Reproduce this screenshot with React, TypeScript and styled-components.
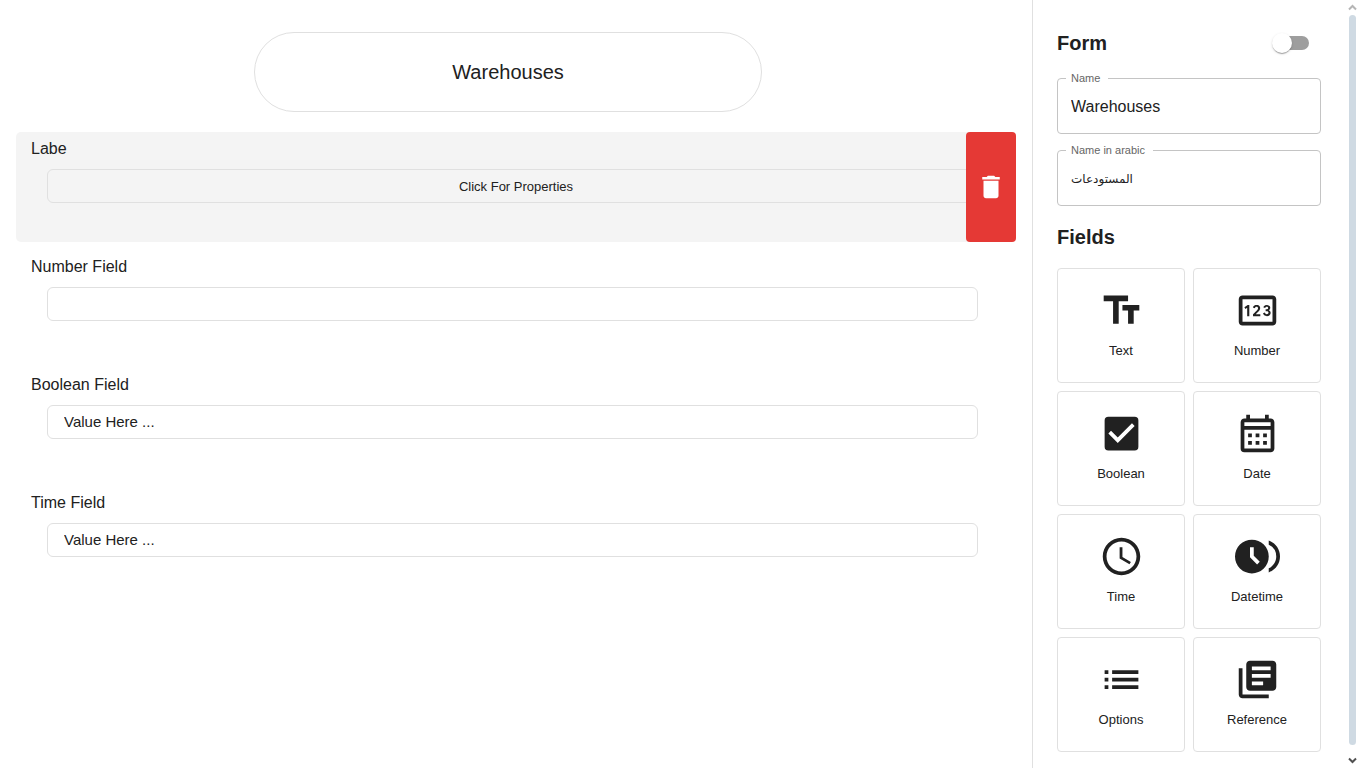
import React from "react";
import styled, { createGlobalStyle } from "styled-components";
import {
  MdAccessTime,
  MdBrowseGallery,
  MdCheckBox,
  MdDelete,
  MdLibraryBooks,
  MdList,
  MdOutlineCalendarMonth,
  MdOutlinePin,
  MdTextFields,
} from "react-icons/md";
import type { IconType } from "react-icons";

const GlobalStyle = createGlobalStyle`
  *, *::before, *::after { box-sizing: border-box; }
  body {
    margin: 0;
    background: #fff;
    color: #212121;
    font-family: "Liberation Sans", Arial, sans-serif;
    font-size: 16px;
  }
  button, input { font: inherit; color: inherit; }
`;

const Page = styled.div`
  display: flex;
  min-height: 100vh;
`;

const Canvas = styled.main`
  flex: 1;
  min-width: 0;
  display: flex;
  flex-direction: column;
  gap: 20px;
  padding: 32px 16px;
`;

const TitleBar = styled.header`
  display: flex;
  justify-content: center;
  padding-right: 16px;
`;

const FormTitle = styled.h1`
  display: flex;
  align-items: center;
  justify-content: center;
  width: 508px;
  max-width: 100%;
  height: 80px;
  margin: 0;
  border: 1px solid #e0e0e0;
  border-radius: 40px;
  font-size: 20px;
  font-weight: 400;
`;

const FieldList = styled.div`
  display: flex;
  flex-direction: column;
  gap: 8px;
`;

const FieldRow = styled.section<{ $selected?: boolean }>`
  position: relative;
  display: flex;
  flex-direction: column;
  gap: 8px;
  min-height: 110px;
  padding: 5px 0;
  border-radius: 5px;
  background: ${(p) => (p.$selected ? "#f4f4f4" : "transparent")};
`;

const FieldLabel = styled.label`
  margin-left: 15px;
  line-height: 24px;
`;

const FieldInput = styled.input`
  height: 34px;
  margin: 0 38px 0 31px;
  padding: 0 16px 2px;
  border: 1px solid #e0e0e0;
  border-radius: 6px;
  background: transparent;
  font-size: 15px;
  outline: none;
  &::placeholder {
    color: #212121;
    opacity: 1;
  }
`;

const PropertiesButton = styled.button`
  height: 34px;
  margin: 0 31px;
  padding: 0;
  border: 1px solid #e0e0e0;
  border-radius: 6px;
  background: transparent;
  font-size: 13px;
  cursor: pointer;
`;

const DeleteButton = styled.button`
  position: absolute;
  top: 0;
  right: 0;
  bottom: 0;
  display: flex;
  align-items: center;
  justify-content: center;
  width: 50px;
  padding: 0;
  border: 0;
  border-radius: 4px;
  background: #e53935;
  color: #fff;
  cursor: pointer;
`;

const Sidebar = styled.aside`
  flex: 0 0 328px;
  display: flex;
  border-left: 1px solid #e0e0e0;
`;

const SidebarBody = styled.div`
  flex: 1;
  padding: 24px 23px 16px 24px;
`;

const SectionHead = styled.div`
  display: flex;
  align-items: center;
  justify-content: space-between;
  height: 38px;
  padding-right: 12px;
`;

const SectionTitle = styled.h2`
  margin: 0;
  font-size: 20px;
  font-weight: 700;
`;

const Switch = styled.input`
  appearance: none;
  display: flex;
  align-items: center;
  width: 34px;
  height: 14px;
  margin: 0;
  border-radius: 7px;
  background: #9e9e9e;
  cursor: pointer;
  &::before {
    content: "";
    flex: none;
    width: 20px;
    height: 20px;
    margin-left: -3px;
    border-radius: 50%;
    background: #fff;
    box-shadow: 0 2px 1px -1px rgba(0, 0, 0, 0.2), 0 1px 1px rgba(0, 0, 0, 0.14),
      0 1px 3px rgba(0, 0, 0, 0.12);
  }
  &:checked::before {
    margin-left: 17px;
  }
`;

const TextFields = styled.div`
  display: flex;
  flex-direction: column;
  gap: 10px;
  margin: 10px 0 12px;
`;

const Outline = styled.fieldset`
  min-width: 0;
  height: 62px;
  margin: 0;
  padding: 0 13px;
  border: 1px solid #c4c4c4;
  border-radius: 4px;
`;

const Legend = styled.legend`
  margin-left: -5px;
  padding: 0 8px 0 5px;
  color: #666;
  font-size: 11px;
  line-height: 12px;
`;

const TextInput = styled.input<{ $arabic?: boolean }>`
  display: block;
  width: 100%;
  height: 46px;
  padding: 0;
  border: 0;
  background: transparent;
  font-family: ${(p) =>
    p.$arabic ? '"DejaVu Sans", sans-serif' : '"Liberation Sans", Arial, sans-serif'};
  font-size: ${(p) => (p.$arabic ? "12px" : "16px")};
  outline: none;
`;

const FieldGrid = styled.div`
  display: grid;
  grid-template-columns: 1fr 1fr;
  gap: 8px;
  margin-top: 12px;
`;

const FieldCard = styled.button`
  display: flex;
  flex-direction: column;
  align-items: center;
  gap: 10px;
  height: 115px;
  padding: 19px 0 0;
  border: 1px solid #e0e0e0;
  border-radius: 4px;
  background: #fff;
  font-size: 13px;
  line-height: 16px;
  cursor: pointer;
`;

const ScrollTrack = styled.div`
  display: flex;
  flex-direction: column;
  align-items: center;
  justify-content: space-between;
  width: 16px;
  gap: 4px;
  padding: 4px 0;
`;

const ScrollThumb = styled.div`
  flex: 1;
  width: 7px;
  margin-bottom: 8px;
  border-radius: 4px;
  background: #cfdae3;
`;

const Arrow = ({ down }: { down?: boolean }) => (
  <svg width="9" height="7" viewBox="0 0 9 7" fill="none" aria-hidden="true">
    <path
      d={down ? "M1 1.5 4.5 5 8 1.5" : "M1 5.5 4.5 2 8 5.5"}
      stroke={down ? "#505050" : "#b5b5b5"}
      strokeWidth="2"
    />
  </svg>
);

const fields = [
  { id: "number", label: "Number Field", placeholder: "" },
  { id: "boolean", label: "Boolean Field", placeholder: "Value Here ..." },
  { id: "time", label: "Time Field", placeholder: "Value Here ..." },
];

const fieldTypes: { label: string; icon: IconType }[] = [
  { label: "Text", icon: MdTextFields },
  { label: "Number", icon: MdOutlinePin },
  { label: "Boolean", icon: MdCheckBox },
  { label: "Date", icon: MdOutlineCalendarMonth },
  { label: "Time", icon: MdAccessTime },
  { label: "Datetime", icon: MdBrowseGallery },
  { label: "Options", icon: MdList },
  { label: "Reference", icon: MdLibraryBooks },
];

export default function App() {
  return (
    <Page>
      <GlobalStyle />
      <Canvas>
        <TitleBar>
          <FormTitle>Warehouses</FormTitle>
        </TitleBar>
        <FieldList>
          <FieldRow $selected>
            <FieldLabel htmlFor="labe">Labe</FieldLabel>
            <PropertiesButton id="labe" type="button">
              Click For Properties
            </PropertiesButton>
            <DeleteButton type="button" aria-label="Delete field">
              <MdDelete size={30} />
            </DeleteButton>
          </FieldRow>
          {fields.map((f) => (
            <FieldRow key={f.id}>
              <FieldLabel htmlFor={f.id}>{f.label}</FieldLabel>
              <FieldInput id={f.id} type="text" placeholder={f.placeholder} />
            </FieldRow>
          ))}
        </FieldList>
      </Canvas>
      <Sidebar>
        <SidebarBody>
          <SectionHead>
            <SectionTitle>Form</SectionTitle>
            <Switch type="checkbox" role="switch" aria-label="Form" />
          </SectionHead>
          <TextFields>
            <Outline>
              <Legend>
                <label htmlFor="name">Name</label>
              </Legend>
              <TextInput id="name" type="text" defaultValue="Warehouses" />
            </Outline>
            <Outline>
              <Legend>
                <label htmlFor="name-ar">Name in arabic</label>
              </Legend>
              <TextInput $arabic id="name-ar" type="text" defaultValue="المستودعات" />
            </Outline>
          </TextFields>
          <SectionHead>
            <SectionTitle>Fields</SectionTitle>
          </SectionHead>
          <FieldGrid>
            {fieldTypes.map(({ label, icon: Icon }) => (
              <FieldCard key={label} type="button">
                <Icon size={45} />
                {label}
              </FieldCard>
            ))}
          </FieldGrid>
        </SidebarBody>
        <ScrollTrack aria-hidden="true">
          <Arrow />
          <ScrollThumb />
          <Arrow down />
        </ScrollTrack>
      </Sidebar>
    </Page>
  );
}
